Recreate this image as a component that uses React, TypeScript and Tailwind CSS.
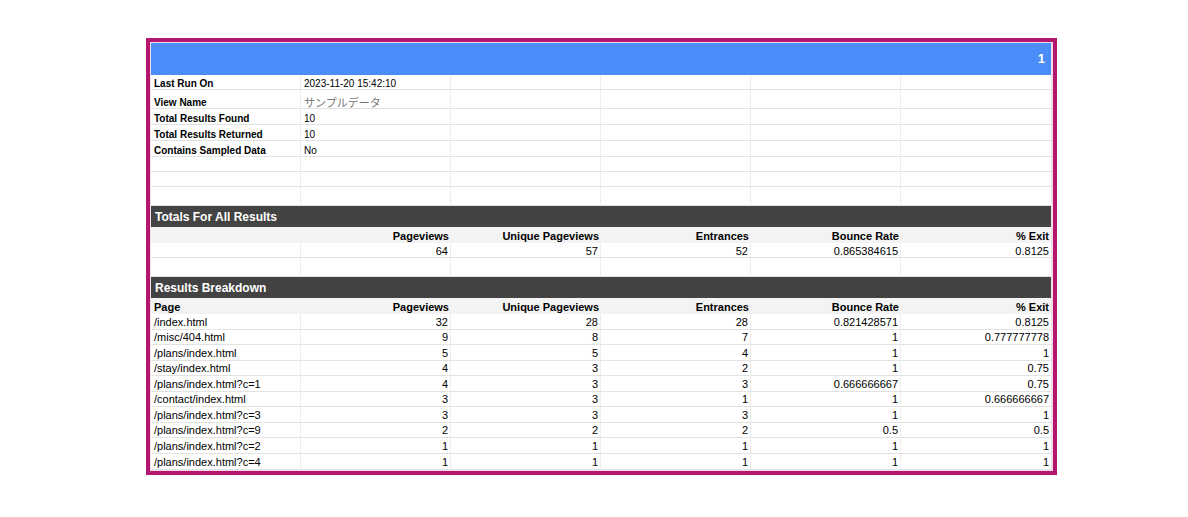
const font = { fontFamily: '"Liberation Sans", Arial, sans-serif' };

const meta = [
  { label: "Last Run On", value: "2023-11-20 15:42:10", h: "h-[15px]" },
  { label: "View Name", value: "サンプルデータ", h: "h-[19px]", jp: true },
  { label: "Total Results Found", value: "10", h: "h-[16px]" },
  { label: "Total Results Returned", value: "10", h: "h-[16px]" },
  { label: "Contains Sampled Data", value: "No", h: "h-[16px]" },
  { label: "", value: "", h: "h-[15px]" },
  { label: "", value: "", h: "h-[15px]" },
  { label: "", value: "", h: "h-[19px]" },
];

const cols = ["Pageviews", "Unique Pageviews", "Entrances", "Bounce Rate", "% Exit"];

const rows: [string, string, string, string, string, string][] = [
  ["/index.html", "32", "28", "28", "0.821428571", "0.8125"],
  ["/misc/404.html", "9", "8", "7", "1", "0.777777778"],
  ["/plans/index.html", "5", "5", "4", "1", "1"],
  ["/stay/index.html", "4", "3", "2", "1", "0.75"],
  ["/plans/index.html?c=1", "4", "3", "3", "0.666666667", "0.75"],
  ["/contact/index.html", "3", "3", "1", "1", "0.666666667"],
  ["/plans/index.html?c=3", "3", "3", "3", "1", "1"],
  ["/plans/index.html?c=9", "2", "2", "2", "0.5", "0.5"],
  ["/plans/index.html?c=2", "1", "1", "1", "1", "1"],
  ["/plans/index.html?c=4", "1", "1", "1", "1", "1"],
];

const rowHeights = ["h-[16px]", "h-[15px]", "h-[16px]", "h-[15px]", "h-[16px]", "h-[15px]", "h-[16px]", "h-[15px]", "h-[16px]", "h-[16px]"];

function Cell({ children, right, last, className = "" }: { children?: React.ReactNode; right?: boolean; last?: boolean; className?: string }) {
  return (
    <div
      className={`flex items-end overflow-hidden whitespace-nowrap border-b border-[#e2e2e2] leading-none ${last ? "" : "border-r border-r-[#ececec]"} ${right ? "justify-end pr-[2px]" : "pl-[3px]"} ${className}`}
    >
      {children}
    </div>
  );
}

function SectionBar({ title }: { title: string }) {
  return (
    <div className="flex h-[21px] items-center bg-[#434343] pl-[4px] text-[12px] font-bold text-white">
      {title}
    </div>
  );
}

function HeaderRow({ first }: { first: string }) {
  return (
    <div className="grid h-[16px] grid-cols-6 bg-[#f3f3f3] text-[11px] font-bold text-black">
      <div className="flex items-end pb-[1px] pl-[3px] leading-none">{first}</div>
      {cols.map((c) => (
        <div key={c} className="flex items-end justify-end pb-[1px] pr-[2px] leading-none">
          {c}
        </div>
      ))}
    </div>
  );
}

export default function App() {
  return (
    <div className="min-h-screen bg-white pl-[146px] pt-[38px]" style={font}>
      <div className="w-[911px] border-4 border-[#b2166f] bg-[#f3dbe8] p-[1px]">
        <div className="w-[900px] bg-white">
          <div className="flex h-[32px] items-center justify-end bg-[#4a8cf8] pr-[6px] text-[13px] font-bold text-white">
            1
          </div>

          {meta.map((m, i) => (
            <div key={i} className={`grid grid-cols-6 text-[10px] text-black ${m.h}`}>
              <Cell className={m.jp ? "items-center font-bold" : "font-bold"}>{m.label}</Cell>
              <Cell className={m.jp ? "items-center text-[11px] text-[#777777]" : ""}>
                {m.jp ? <span style={{ fontFamily: '"Noto Sans CJK JP", sans-serif' }}>{m.value}</span> : m.value}
              </Cell>
              <Cell />
              <Cell />
              <Cell />
              <Cell last />
            </div>
          ))}

          <SectionBar title="Totals For All Results" />
          <HeaderRow first="" />
          <div className="grid h-[15px] grid-cols-6 text-[11px] text-black">
            <Cell />
            <Cell right>64</Cell>
            <Cell right>57</Cell>
            <Cell right>52</Cell>
            <Cell right>0.865384615</Cell>
            <Cell right last>0.8125</Cell>
          </div>
          <div className="grid h-[19px] grid-cols-6">
            <Cell />
            <Cell />
            <Cell />
            <Cell />
            <Cell />
            <Cell last />
          </div>

          <SectionBar title="Results Breakdown" />
          <HeaderRow first="Page" />
          {rows.map((r, i) => (
            <div key={r[0]} className={`grid grid-cols-6 text-[11px] text-black ${rowHeights[i]}`}>
              <Cell className="pb-[1px]">{r[0]}</Cell>
              {r.slice(1).map((v, j) => (
                <Cell key={j} right last={j === 4} className="pb-[1px]">
                  {v}
                </Cell>
              ))}
            </div>
          ))}
        </div>
      </div>
    </div>
  );
}
